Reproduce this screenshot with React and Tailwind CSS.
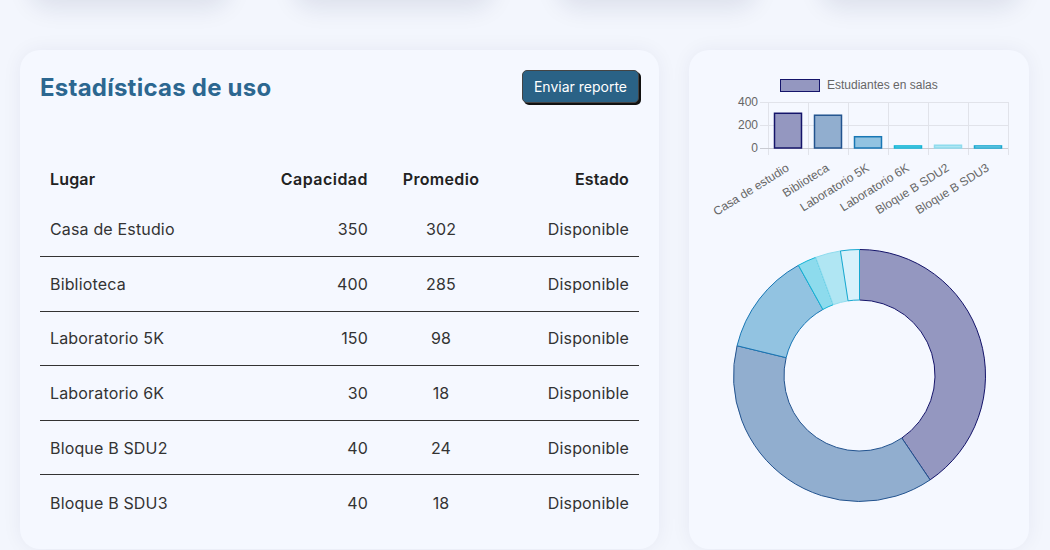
import React from 'react';

const places = [
  { name: 'Casa de Estudio', short: 'Casa de estudio', cap: 350, avg: 302, fill: '#9497c0', stroke: '#14146a' },
  { name: 'Biblioteca', short: 'Biblioteca', cap: 400, avg: 285, fill: '#91aecf', stroke: '#22538f' },
  { name: 'Laboratorio 5K', short: 'Laboratorio 5K', cap: 150, avg: 98, fill: '#92c3e1', stroke: '#1877b5' },
  { name: 'Laboratorio 6K', short: 'Laboratorio 6K', cap: 30, avg: 18, fill: '#8ddbed', stroke: '#12b5d6' },
  { name: 'Bloque B SDU2', short: 'Bloque B SDU2', cap: 40, avg: 24, fill: '#b0e6f3', stroke: '#8fdcee' },
  { name: 'Bloque B SDU3', short: 'Bloque B SDU3', cap: 40, avg: 18, fill: '#d8f1fb', stroke: '#18a8d0' },
];

const BarChart = () => {
  const base = 78;
  const scale = 46 / 400;
  return (
    <svg width="340" height="160" className="block" style={{ fontFamily: '"Liberation Sans", Arial, sans-serif' }}>
      <rect x="91.5" y="9.5" width="39" height="12" fill="#9497c0" stroke="#14146a" strokeWidth="1" />
      <text x="138" y="19" fontSize="12" fill="#666">Estudiantes en salas</text>

      {[0, 1, 2, 3, 4, 5, 6].map((i) => (
        <line key={i} x1={79.5 + i * 40} x2={79.5 + i * 40} y1="32" y2="85" stroke="#e1e3ea" strokeWidth="1" />
      ))}
      <line x1="71" x2="319" y1="32.5" y2="32.5" stroke="#e1e3ea" />
      <line x1="71" x2="319" y1="55.5" y2="55.5" stroke="#e1e3ea" />
      <line x1="71" x2="319" y1="78.5" y2="78.5" stroke="#c9cbd2" />

      <text x="69" y="36" fontSize="12" fill="#666" textAnchor="end">400</text>
      <text x="69" y="59" fontSize="12" fill="#666" textAnchor="end">200</text>
      <text x="69" y="82" fontSize="12" fill="#666" textAnchor="end">0</text>

      {places.map((p, i) => {
        const h = p.avg * scale;
        const x = 85.5 + i * 40;
        return (
          <rect key={p.name} x={x} y={base - h} width="27" height={h} fill={p.fill} stroke={p.stroke} strokeWidth="1.5" />
        );
      })}

      {places.map((p, i) => (
        <text
          key={p.short}
          fontSize="12"
          fill="#666"
          textAnchor="end"
          transform={`translate(${101 + i * 40},100) rotate(-32)`}
        >
          {p.short}
        </text>
      ))}
    </svg>
  );
};

const Doughnut = () => {
  const cx = 170.5;
  const cy = 145.5;
  const ro = 126;
  const ri = 75.5;
  const total = places.reduce((s, p) => s + p.avg, 0);
  const pt = (a, r) => {
    const rad = (a * Math.PI) / 180;
    return [cx + r * Math.sin(rad), cy - r * Math.cos(rad)];
  };
  let acc = 0;
  return (
    <svg width="340" height="280" className="block">
      {places.map((p) => {
        const start = (acc / total) * 360;
        acc += p.avg;
        const end = (acc / total) * 360;
        const large = end - start > 180 ? 1 : 0;
        const [x1, y1] = pt(start, ro);
        const [x2, y2] = pt(end, ro);
        const [x3, y3] = pt(end, ri);
        const [x4, y4] = pt(start, ri);
        const d = `M${x1} ${y1} A${ro} ${ro} 0 ${large} 1 ${x2} ${y2} L${x3} ${y3} A${ri} ${ri} 0 ${large} 0 ${x4} ${y4} Z`;
        return <path key={p.name} d={d} fill={p.fill} stroke={p.stroke} strokeWidth="1" />;
      })}
    </svg>
  );
};

const App = () => {
  return (
    <div className="min-h-screen bg-[#f3f6fd] overflow-hidden" style={{ fontFamily: 'Inter, "Noto Sans", sans-serif' }}>
      {/* top summary cards, scrolled out */}
      <div className="grid grid-cols-4 gap-[65px] px-[30px] h-[98px] -mt-[100px]">
        <div className="rounded-[20px] bg-[#f5f8ff] shadow-[0_10px_24px_rgba(20,30,80,0.10)]"></div>
        <div className="rounded-[20px] bg-[#f5f8ff] shadow-[0_10px_24px_rgba(20,30,80,0.10)]"></div>
        <div className="rounded-[20px] bg-[#f5f8ff] shadow-[0_10px_24px_rgba(20,30,80,0.10)]"></div>
        <div className="rounded-[20px] bg-[#f5f8ff] shadow-[0_10px_24px_rgba(20,30,80,0.10)]"></div>
      </div>

      <div className="flex gap-[30px] px-[20px] mt-[52px]">
        {/* Table card */}
        <div className="w-[639px] h-[499px] rounded-[20px] bg-[#f5f8ff] shadow-[0_0_20px_rgba(20,30,80,0.06)] px-[20px] pt-[20px]">
          <div className="flex justify-between items-start">
            <h1 className="text-[24px] leading-[34px] font-bold text-[#2c6790] mt-[1px] tracking-[0.01em]">Estadísticas de uso</h1>
            <button className="bg-[#2a6286] text-white text-[14px] leading-none px-[11px] h-[33px] rounded-[5px] border border-[#444] shadow-[2px_2px_0_#111]">
              Enviar reporte
            </button>
          </div>

          <table className="w-full mt-[51px] text-[16px] text-[#333] border-collapse tracking-[0.01em]">
            <thead>
              <tr className="h-[46px] align-middle">
                <th className="w-[200px] text-left font-semibold text-[#222] pl-[10px]">Lugar</th>
                <th className="w-[138px] text-right font-semibold text-[#222] pr-[10px] tracking-[0.03em]">Capacidad</th>
                <th className="w-[126px] text-center font-semibold text-[#222] tracking-[0.02em]">Promedio</th>
                <th className="text-right font-semibold text-[#222] pr-[10px]">Estado</th>
              </tr>
            </thead>
            <tbody>
              {places.map((p, i) => (
                <tr key={p.name} className={i < places.length - 1 ? 'h-[54.6px] border-b border-[#333]' : 'h-[54.6px]'}>
                  <td className="pl-[10px]">{p.name}</td>
                  <td className="text-right pr-[10px]">{p.cap}</td>
                  <td className="text-center">{p.avg}</td>
                  <td className="text-right pr-[10px]">Disponible</td>
                </tr>
              ))}
            </tbody>
          </table>
        </div>

        {/* Charts card */}
        <div className="w-[340px] h-[499px] rounded-[20px] bg-[#f5f8ff] shadow-[0_0_20px_rgba(20,30,80,0.06)] pt-[20px]">
          <BarChart />
          <Doughnut />
        </div>
      </div>
    </div>
  );
};

export default App;
